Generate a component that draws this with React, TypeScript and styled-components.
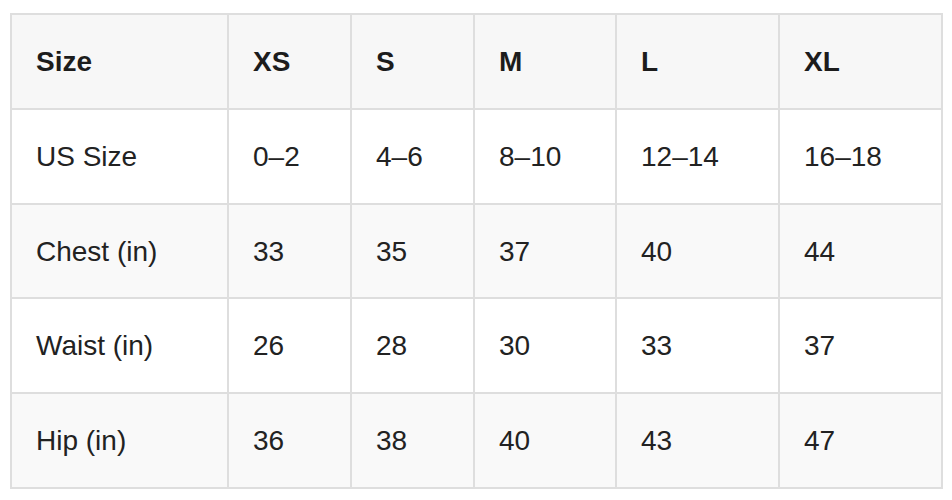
import React from "react";
import styled, { createGlobalStyle } from "styled-components";

const Global = createGlobalStyle`
  html, body { margin: 0; padding: 0; background: #ffffff; }
  body { font-family: "Liberation Sans", Arial, Helvetica, sans-serif; }
`;

const Page = styled.div`
  padding: 13px 11px 0 10px;
`;

const Table = styled.table`
  width: 931px;
  border-collapse: collapse;
  table-layout: fixed;
  font-size: 28px;
  line-height: 1.6;
  color: #222222;
`;

const Head = styled.thead`
  background: #f7f7f7;
`;

const Row = styled.tr<{ $striped?: boolean }>`
  background: ${(p) => (p.$striped ? "#f9f9f9" : "#ffffff")};
`;

const HeadCell = styled.th`
  border: 2px solid #dedede;
  padding: 25px 24px 23px;
  text-align: left;
  font-weight: 700;
  color: #1c1c1c;
  white-space: nowrap;
`;

const Cell = styled.td`
  border: 2px solid #dedede;
  padding: 25px 24px 23px;
  text-align: left;
  white-space: nowrap;
`;

const widths = [217, 123, 123, 142, 163, 163];
const headers = ["Size", "XS", "S", "M", "L", "XL"];
const rows: string[][] = [
  ["US Size", "0–2", "4–6", "8–10", "12–14", "16–18"],
  ["Chest (in)", "33", "35", "37", "40", "44"],
  ["Waist (in)", "26", "28", "30", "33", "37"],
  ["Hip (in)", "36", "38", "40", "43", "47"],
];

export default function App() {
  return (
    <>
      <Global />
      <Page>
        <Table>
          <colgroup>
            {widths.map((w, i) => (
              <col key={i} style={{ width: w }} />
            ))}
          </colgroup>
          <Head>
            <tr>
              {headers.map((h) => (
                <HeadCell key={h}>{h}</HeadCell>
              ))}
            </tr>
          </Head>
          <tbody>
            {rows.map((r, i) => (
              <Row key={r[0]} $striped={i % 2 === 1}>
                {r.map((c, j) => (
                  <Cell key={j}>{c}</Cell>
                ))}
              </Row>
            ))}
          </tbody>
        </Table>
      </Page>
    </>
  );
}
